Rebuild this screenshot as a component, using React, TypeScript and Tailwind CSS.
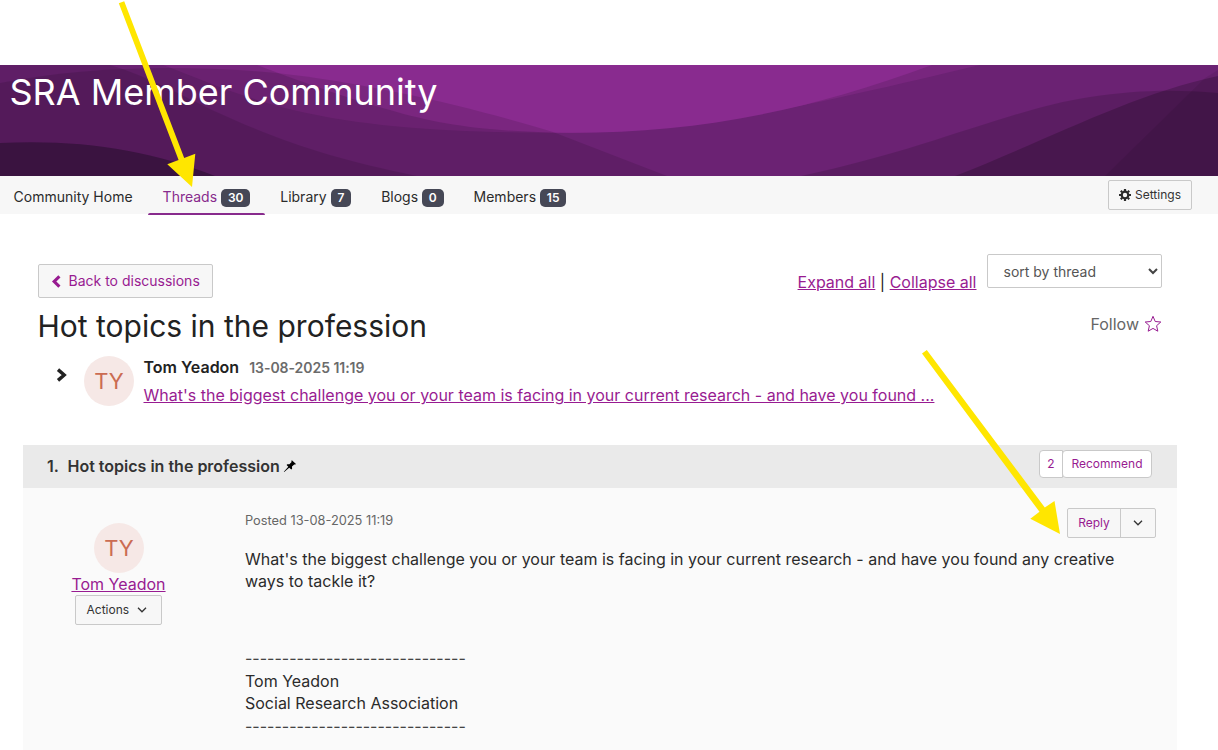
import React from "react";
import clsx from "clsx";

interface Tab {
  label: string;
  count?: number;
  active?: boolean;
}

const tabs: Tab[] = [
  { label: "Community Home" },
  { label: "Threads", count: 30, active: true },
  { label: "Library", count: 7 },
  { label: "Blogs", count: 0 },
  { label: "Members", count: 15 },
];

const Banner = () => (
  <header className="relative h-[111px] shrink-0 overflow-hidden">
    <svg
      className="absolute inset-0 h-full w-full"
      viewBox="0 0 1218 111"
      preserveAspectRatio="none"
    >
      <rect width="1218" height="111" fill="#6b2273" />
      <path
        d="M163 0C200 14 240 32 293 45C370 63 450 67 553 68C690 68 790 45 980 0Z"
        fill="#78267e"
      />
      <path
        d="M257 0C310 20 350 34 390 45C440 60 490 67 570 67.7C690 68 800 49 932 0Z"
        fill="#892b8f"
      />
      <path
        d="M0 18C80 2 180 -1 277 8C370 18 475 43 553 67L667 111H0Z"
        fill="#000"
        opacity="0.11"
      />
      <path
        d="M0 0H110C150 12 185 32 212 45C280 76 330 93 417 111H0Z"
        fill="#000"
        opacity="0.11"
      />
      <path d="M0 78C80 74 150 85 215 111H0Z" fill="#3a1340" />
      <path
        d="M801 111C930 84 1010 44 1090 32C1135 25 1175 24 1218 28V111Z"
        fill="#000"
        opacity="0.14"
      />
      <path d="M955 111C1050 74 1130 30 1218 11V111Z" fill="#000" opacity="0.2" />
      <path d="M1105 111L1205 13L1218 5V111Z" fill="#000" opacity="0.07" />
    </svg>
    <h1 className="relative pt-[5px] pl-[9.5px] text-[36px] leading-[44px] text-white">
      SRA Member Community
    </h1>
  </header>
);

const NavTab = ({ label, count, active }: Tab) => (
  <a
    className={clsx(
      "relative flex h-[38px] items-center gap-1 px-[15px] pt-1 text-[14px]",
      active ? "text-[#882b8d]" : "text-[#2b2b2b]",
    )}
  >
    <span className="-mt-0.5">{label}</span>
    {count !== undefined && (
      <span className="mt-0.5 flex h-[18px] items-center rounded-[5px] bg-[#464856] px-[6.8px] text-[12px] font-semibold text-white">
        {count}
      </span>
    )}
    {active && (
      <span className="absolute inset-x-0 -bottom-px h-0.5 rounded-t-sm bg-[#882b8d]" />
    )}
  </a>
);

const Cog = () => (
  <svg className="h-3 w-3" viewBox="0 0 12 12" fill="none" stroke="#2b2b2b">
    <circle cx="6" cy="6" r="3.3" strokeWidth="2.2" />
    <path
      d="M6 0v2M6 10v2M0 6h2M10 6h2M1.8 1.8l1.4 1.4M8.8 8.8l1.4 1.4M10.2 1.8L8.8 3.2M3.2 8.8l-1.4 1.4"
      strokeWidth="2.2"
    />
  </svg>
);

const CaretDown = () => (
  <svg className="h-[6px] w-[10px]" viewBox="0 0 10 6" fill="none" stroke="#333">
    <path d="M1 0.8L5 4.8L9 0.8" strokeWidth="1.3" />
  </svg>
);

const Avatar = () => (
  <div className="flex h-[50px] w-[50px] shrink-0 items-center justify-center rounded-full bg-[#f6e8e6] text-[22px] text-[#cb6c52]">
    TY
  </div>
);

const Toolbar = () => (
  <div className="flex h-[34px] items-start justify-between">
    <button className="mt-2.5 flex h-[34px] w-[175px] items-center rounded-[2px] border border-[#c9c9c9] bg-[#f7f7f7] pl-3 text-[14px] text-[#981b91]">
      <svg className="mr-[7.5px] h-[13px] w-[10px]" viewBox="0 0 10 13" fill="none" stroke="currentColor">
        <path d="M8.4 1.4L3.2 6.5L8.4 11.6" strokeWidth="3.1" />
      </svg>
      <span className="pb-px">Back to discussions</span>
    </button>
    <div className="flex text-[16px]">
      <div className="flex pt-[17px] leading-[22px]">
        <a className="text-[#981b91] underline">Expand all</a>
        <span className="mx-[4.5px] text-[#222]">|</span>
        <a className="text-[#981b91] underline">Collapse all</a>
      </div>
      <div className="ml-[10.5px] flex h-[34px] w-[175px] items-center justify-between rounded-[2px] border border-[#c9c9c9] bg-white pr-[3px] pl-[15.5px] text-[14px] text-[#555]">
        <span>sort by thread</span>
        <svg className="h-[7px] w-[10px]" viewBox="0 0 10 7" fill="none" stroke="#444">
          <path d="M1 1L5 5L9 1" strokeWidth="2" />
        </svg>
      </div>
    </div>
  </div>
);

const ThreadSummary = () => (
  <div className="flex h-[60px]">
    <svg className="mt-[15px] ml-[18px] h-3.5 w-[11px]" viewBox="0 0 11 14" fill="none" stroke="#222">
      <path d="M2 1.6L8.2 7L2 12.4" strokeWidth="3.4" />
    </svg>
    <div className="mt-[3px] ml-[17px]">
      <Avatar />
    </div>
    <div className="ml-[9.5px]">
      <div className="flex h-7 items-center gap-[10px]">
        <span className="text-[16px] font-semibold text-[#222]">Tom Yeadon</span>
        <span className="text-[14px] font-semibold tracking-[-0.04px] text-[#6b6b6b]">13-08-2025 11:19</span>
      </div>
      <a className="block leading-7 whitespace-nowrap text-[#981b91] underline">
        What's the biggest challenge you or your team is facing in your current research - and have you found ...
      </a>
    </div>
  </div>
);

const PostHeader = () => (
  <div className="flex h-[43px] items-start justify-between bg-[#eaeaea] pr-[25px] pl-6">
    <div className="flex h-[42px] items-center text-[16px] font-semibold text-[#333]">
      <span className="w-[20.5px]">1.</span>
      <span>Hot topics in the profession</span>
      <svg className="ml-[3px] h-3.5 w-3.5" viewBox="0 0 14 14" fill="#000">
        <path d="M8.9 1.2L13 4.9L12.3 5.6L11.2 5.4L9 7.6L9.1 9.7L8.3 10.4L6.2 8.7L1.2 13.1L0.8 12.7L5.3 7.8L3.6 5.9L4.3 5.2L6.4 5.2L8.6 3.1L8.3 1.9Z" />
      </svg>
    </div>
    <div className="mt-[5px] flex h-7 text-[12px] text-[#981b91]">
      <span className="flex w-6 items-center justify-center rounded-l-[4px] border border-[#c9c9c9] bg-white">
        2
      </span>
      <button className="-ml-px flex w-[90px] items-center justify-center rounded-[4px] border border-[#c9c9c9] bg-white">
        Recommend
      </button>
    </div>
  </div>
);

const PostBody = () => (
  <div className="flex flex-1 bg-[#fafafa]">
    <aside className="flex w-[192px] shrink-0 flex-col items-center pt-[35px]">
      <Avatar />
      <a className="mr-px leading-[22px] text-[#981b91] underline">Tom Yeadon</a>
      <button className="mr-px flex h-[30px] w-[87px] items-center gap-2 rounded-[2px] border border-[#c9c9c9] bg-[#f7f7f7] pl-[10.5px] text-[12px] text-[#333]">
        Actions
        <CaretDown />
      </button>
    </aside>
    <div className="min-w-0 flex-1 pt-5 pl-[30px]">
      <div className="flex h-10 items-start justify-between pr-[21px]">
        <p className="pt-1 text-[12.8px] leading-[18px] text-[#666]">Posted 13-08-2025 11:19</p>
        <div className="flex h-[30px] w-[89px] rounded-[2px] border border-[#c9c9c9] bg-[#f7f7f7] text-[12px] text-[#981b91]">
          <button className="flex w-[53px] items-center justify-center border-r border-[#c9c9c9]">
            Reply
          </button>
          <button className="flex flex-1 items-center justify-center">
            <CaretDown />
          </button>
        </div>
      </div>
      <div className="text-[16px] leading-[22px] text-[#2b2b2b]">
        <p className="w-[890px]">
          What's the biggest challenge you or your team is facing in your current research - and have you found any
          creative ways to tackle it?
        </p>
        <p className="mt-[55px] text-[#444]">------------------------------</p>
        <p className="mt-px">Tom Yeadon</p>
        <p>Social Research Association</p>
        <p className="mt-px text-[#444]">------------------------------</p>
      </div>
    </div>
  </div>
);

// Yellow pointers drawn over the page
const Arrows = () => (
  <svg
    className="pointer-events-none absolute inset-0"
    width="1218"
    height="750"
    viewBox="0 0 1218 750"
    fill="#ffe600"
  >
    <path d="M118.8 3.2L124.2 1.2L184.2 158L195.3 153.8L192 187L167.3 164.2L178.6 160Z" />
    <path d="M922 353.5L926.8 350L1044.8 507.5L1054.5 501L1060 534L1030.3 518.8L1039.5 511.8Z" />
  </svg>
);

export default function App() {
  return (
    <div className="relative flex h-[750px] w-[1218px] flex-col overflow-hidden bg-white pt-[65px] font-['Inter',sans-serif]">
      <Banner />
      <nav className="flex h-[38px] shrink-0 items-start bg-[#f7f7f7] pr-[26px]">
        <div className="-ml-[1.4px] flex">
          {tabs.map((tab) => (
            <NavTab key={tab.label} {...tab} />
          ))}
        </div>
        <button className="mt-1 ml-auto flex h-[30px] w-[84px] items-center justify-center gap-1 rounded-[2px] border border-[#c9c9c9] bg-[#f7f7f7] text-[12px] text-[#333]">
          <Cog />
          Settings
        </button>
      </nav>
      <main className="flex flex-1 flex-col pt-10">
        <div className="h-[191px] shrink-0 pr-[56px] pl-[38px]">
          <Toolbar />
          <div className="mt-[18px] flex h-10 items-center justify-between">
            <h2 className="-ml-[0.5px] pt-px text-[30px] text-[#222]">Hot topics in the profession</h2>
            <span className="mb-1 flex items-center gap-[5px] text-[16px] text-[#666]">
              Follow
              <svg className="h-[18px] w-[18px]" viewBox="0 0 18 18" fill="none" stroke="#981b91">
                <path d="M9 1.3L11.2 6.5L16.8 7L12.6 10.7L13.8 16.2L9 13.4L4.2 16.2L5.4 10.7L1.2 7L6.8 6.5Z" />
              </svg>
            </span>
          </div>
          <div className="mt-[7px]">
            <ThreadSummary />
          </div>
        </div>
        <section className="mr-[41px] ml-[23px] flex flex-1 flex-col">
          <PostHeader />
          <PostBody />
        </section>
      </main>
      <Arrows />
    </div>
  );
}
